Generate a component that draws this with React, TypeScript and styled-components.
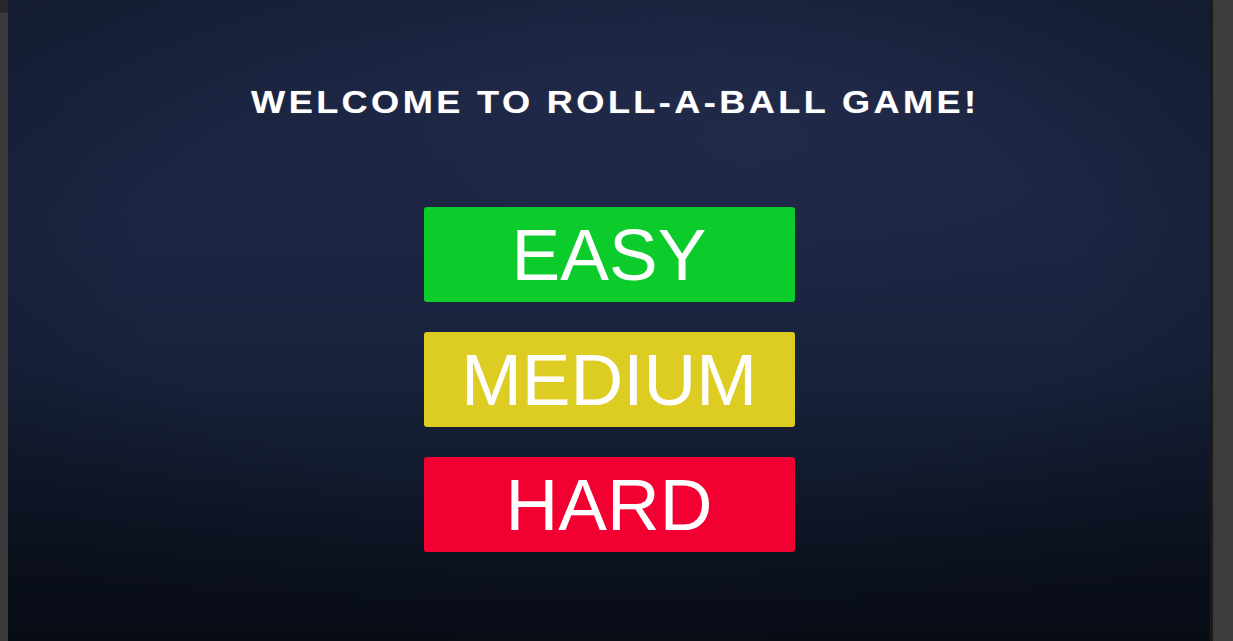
import React from "react";
import styled, { createGlobalStyle } from "styled-components";

const GlobalStyle = createGlobalStyle`
  html, body {
    margin: 0;
    padding: 0;
    height: 100%;
    overflow: hidden;
    background: #3c3c3c;
  }
  #root {
    height: 100%;
  }
`;

const Shell = styled.div`
  display: flex;
  width: 1233px;
  height: 641px;
  background: #3c3c3c;
`;

const LeftRail = styled.div`
  width: 8px;
  display: flex;
  flex-direction: column;
`;

const RailCap = styled.div`
  height: 13px;
  background: #282828;
`;

const RailBody = styled.div`
  flex: 1;
  background: #3a3a3a;
`;

const GameView = styled.main`
  flex: 1;
  display: flex;
  flex-direction: column;
  align-items: center;
  background:
    radial-gradient(ellipse 50% 40% at 62% 22%, rgba(40, 46, 80, 0.35), rgba(40, 46, 80, 0) 70%),
    radial-gradient(ellipse 70% 60% at 50% 45%, rgba(0, 0, 0, 0) 55%, rgba(4, 8, 16, 0.35) 100%),
    linear-gradient(180deg, #1d2745 0%, #1c2643 35%, #18223c 58%, #0f1626 82%, #090e18 100%);
`;

const Divider = styled.div`
  width: 3px;
  background: #1a1a1a;
`;

const RightRail = styled.div`
  width: 20px;
  background: #3c3c3c;
`;

/* the in-game title font is wider than Arial bold, so stretch it a little */
const Title = styled.h1`
  margin: 83px 0 0 12px;
  font-family: "Liberation Sans", Arial, sans-serif;
  font-weight: 700;
  font-size: 32px;
  line-height: 38px;
  letter-spacing: 3px;
  color: #ffffff;
  transform: scaleX(1.13);
  text-shadow: 0 0 1px rgba(255, 255, 255, 0.4);
`;

const ButtonStack = styled.div`
  display: flex;
  flex-direction: column;
  gap: 30px;
  margin-top: 86px;
`;

const LevelButton = styled.button<{ $color: string }>`
  width: 371px;
  height: 95px;
  border: none;
  border-radius: 3px;
  background: ${(p) => p.$color};
  color: #ffffff;
  font-family: "Liberation Sans", Arial, sans-serif;
  font-size: 73px;
  line-height: 95px;
  padding: 0;
  cursor: pointer;
`;

const levels = [
  { label: "EASY", color: "#0ccc2c" },
  { label: "MEDIUM", color: "#ddcd23" },
  { label: "HARD", color: "#f20032" },
];

export default function App() {
  return (
    <>
      <GlobalStyle />
      <Shell>
        <LeftRail>
          <RailCap />
          <RailBody />
        </LeftRail>
        <GameView>
          <Title>WELCOME TO ROLL-A-BALL GAME!</Title>
          <ButtonStack>
            {levels.map((l) => (
              <LevelButton key={l.label} $color={l.color}>
                {l.label}
              </LevelButton>
            ))}
          </ButtonStack>
        </GameView>
        <Divider />
        <RightRail />
      </Shell>
    </>
  );
}
